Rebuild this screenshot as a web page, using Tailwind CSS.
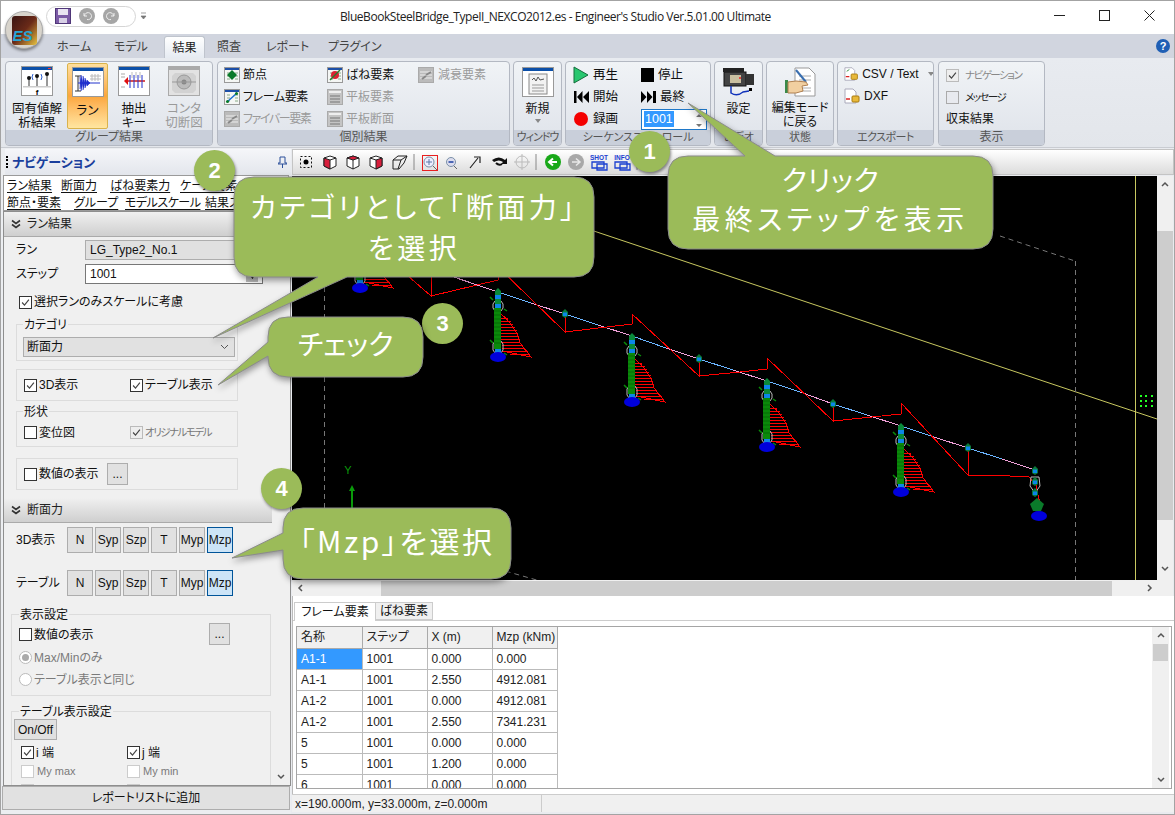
<!DOCTYPE html>
<html lang="ja">
<head>
<meta charset="UTF-8">
<title>Engineer's Studio</title>
<script src="https://cdn.jsdelivr.net/npm/@tailwindcss/browser@4"></script>
</head>
<body class="bg-[#e9ebef]">
<svg class="absolute w-0 h-0">
  <defs>
    <symbol id="dbl" viewBox="0 0 10 10"><path d="M1 1.5 5 4.5 9 1.5M1 5.5 5 8.5 9 5.5" fill="none" stroke="#333" stroke-width="1.6"/></symbol>
    <symbol id="chk" viewBox="0 0 13 13"><path d="M2.5 6.5 5.3 9.5 10.5 3" fill="none" stroke="#444" stroke-width="1.4"/></symbol>
    <symbol id="smallwin" viewBox="0 0 16 16"><rect x=".5" y=".5" width="15" height="15" fill="#f4f6f4" stroke="#999"/><rect x="1" y="1" width="14" height="2" fill="#1c4fa8"/><path d="M3 6h3M3 9h3M3 12h3M11 6h3M11 9h3M11 12h3" stroke="#8a8" /></symbol>
    <symbol id="smallgray" viewBox="0 0 16 16"><rect x=".5" y=".5" width="15" height="15" fill="#bbb" stroke="#aaa"/><path d="M2 5h12M2 8h12M2 11h12" stroke="#eee"/><path d="M8 8l5-3M4 12l4-3" stroke="#888" stroke-width="2"/></symbol>
    <symbol id="smallplate" viewBox="0 0 16 16"><rect x=".5" y=".5" width="15" height="15" fill="#c4c4c4" stroke="#aaa"/><path d="M2 3h12" stroke="#eee" stroke-width="2"/><path d="M3 7h10M3 10h10M3 13h10" stroke="#777"/></symbol>
    <symbol id="pier" viewBox="-20 -4 60 80" overflow="visible">
      <g fill="none" stroke="#ff0000" stroke-width="1" shape-rendering="crispEdges">
        <path d="M3 23 C12 30 20 42 22 52 L33 66 L4 60"/>
        <path d="M3 27H10M3 30H13M3 33H15M3 36H17M3 39H19M3 42H20M3 45H21M3 48H22M3 51H22M4 54H24M4 57H27M6 60H30M12 63H32"/>
      </g>
      <rect x="-3" y="0" width="6" height="64" fill="#0c86e8"/>
      <path d="M-3 10-5 13V17L-3 20H3L5 17V13L3 10Z" fill="none" stroke="#bbb"/>
      <path d="M-3 50-5 53V59L-3 62H3L5 59V53L3 50Z" fill="none" stroke="#bbb"/>
      <path d="M-3 0 0-3 3 0 3 4-3 4Z M-3 8H3V13H-3Z" fill="#0a8a3a"/>
      <rect x="-4" y="17" width="7" height="41" fill="#0a8a0a"/>
      <path d="M-4 20H3M-4 24H3M-4 28H3M-4 32H3M-4 36H3M-4 40H3M-4 44H3M-4 48H3M-4 52H3" stroke="#066a06"/>
      <path d="M-8 6-5 9M6 18 9 20M-8 49-5 52M6 62 9 64" stroke="#0a8a0a" stroke-width="1.5"/>
      <ellipse cx="0" cy="66" rx="8" ry="5" fill="#0000dc"/>
    </symbol>
    <symbol id="node" viewBox="-4 -5 8 10" overflow="visible"><path d="M0-5 3-2V2L0 4-3 2V-2Z" fill="#0a7a3a"/><rect x="-2" y="-1.5" width="4" height="3.5" fill="#0a86e8"/></symbol>
  </defs>
</svg>

<div class="relative w-[1175px] h-[815px] overflow-hidden border border-[#a3a3a3] flex flex-col text-[12px] leading-none text-[#111] [font-feature-settings:'palt'] font-['Liberation_Sans','Noto_Sans_CJK_JP',sans-serif]">

  <!-- title bar -->
  <div class="h-[33px] bg-white flex items-center relative">
    <div class="ml-[45px] w-[90px] h-[21px] mt-[-3px] rounded-full border border-[#d5d5d5] bg-white flex items-center pl-[8px] gap-[8px]">
      <svg width="16" height="16" viewBox="0 0 16 16"><rect x=".5" y=".5" width="15" height="15" fill="#7b5aa6" stroke="#4f3678"/><rect x="3" y="1" width="10" height="6" fill="#e9e3f2"/><rect x="4" y="10" width="8" height="5" fill="#d8d0e6"/></svg>
      <svg width="16" height="16" viewBox="0 0 16 16"><circle cx="8" cy="8" r="8" fill="#a6a6a6"/><path d="M5 5V8H8M5.5 8A3.5 3.5 0 1 1 8 11.5" fill="none" stroke="#eee"/></svg>
      <svg width="16" height="16" viewBox="0 0 16 16"><circle cx="8" cy="8" r="8" fill="#a6a6a6"/><path d="M11 5V8H8M10.500 8A3.500 3.500 0 1 0 8 11.500" fill="none" stroke="#eee"/></svg>
    </div>
    <svg class="ml-[4px] mt-[-3px]" width="7" height="8" viewBox="0 0 7 8"><path d="M1 1H6M1 4H6L3.500 7Z" fill="#777" stroke="#777" stroke-width=".7"/></svg>
    <div class="ml-[193px] w-[432px] whitespace-nowrap text-[12px] text-[#222] font-['Open_Sans','Noto_Sans_CJK_JP',sans-serif] tracking-[-0.45px] mt-[-1px]">BlueBookSteelBridge_TypeII_NEXCO2012.es - Engineer's Studio Ver.5.01.00 Ultimate</div>
    <div class="ml-auto flex items-center mr-[19px] gap-[34px] mt-[-5px]">
      <svg width="11" height="11" viewBox="0 0 11 11"><path d="M0 5.500H11" stroke="#222"/></svg>
      <svg width="11" height="11" viewBox="0 0 11 11"><rect x=".5" y=".5" width="10" height="10" fill="none" stroke="#222"/></svg>
      <svg width="11" height="11" viewBox="0 0 11 11"><path d="M.5 .5 10.500 10.500M10.500 .5 .5 10.500" stroke="#222"/></svg>
    </div>
  </div>

  <!-- app button -->
  <div class="absolute z-10 left-[4px] top-[10px] w-[38px] h-[38px] rounded-full bg-[#d8d4cc] border border-[#aaa] shadow-[0_2px_3px_rgba(0,0,0,.4)] flex items-center justify-center">
    <div class="relative w-[25px] h-[29px] rounded-[3px] overflow-hidden bg-linear-to-br from-[#3a1512] via-[#6a2a18] to-[#e6c440]">
      <span class="absolute left-[1px] bottom-[2px] text-[15px] font-bold italic text-[#27a6d6] font-['Liberation_Sans',sans-serif]">ES</span>
    </div>
  </div>

  <!-- tabs -->
  <div class="h-[24px] bg-[#d1d5df] flex items-end text-[#444] relative">
    <div class="ml-[56px] w-[57px] h-[24px] flex items-center pt-[1px]">ホーム</div>
    <div class="w-[50px] h-[24px] flex items-center pt-[1px]">モデル</div>
    <div class="w-[41px] h-[22px] flex items-center justify-center bg-linear-to-b from-white to-[#e6ebf2] border border-b-0 border-[#bfc4cd] rounded-t-[3px] text-[#222]">結果</div>
    <div class="ml-[12px] w-[49px] h-[24px] flex items-center pt-[1px]">照査</div>
    <div class="w-[62px] h-[24px] flex items-center pt-[1px]">レポート</div>
    <div class="h-[24px] flex items-center pt-[1px]">プラグイン</div>
    <div class="ml-auto mr-[4px] mb-[5px] w-[14px] h-[14px] rounded-full bg-[#1f5fb5] text-white text-[11px] font-bold flex items-center justify-center">?</div>
  </div>

  <!-- ribbon -->
  <div class="h-[90px] bg-linear-to-b from-[#e8ebf0] to-[#e3e6eb] border-b border-[#c9ccd2] pl-[4px] pt-[3px] flex text-[#111]">

    <div class="w-[208px] h-[85px] flex flex-col rounded-[4px] border border-[#b3b8c2] bg-linear-to-b from-[#f0f3f6] to-[#dfe3ea] overflow-hidden">
      <div class="h-[69px] flex text-center leading-[14px] relative">
        <div class="ml-[6px] w-[50px] flex flex-col items-center pt-[4px]">
          <svg width="32" height="30" viewBox="0 0 32 30"><rect x=".5" y=".5" width="31" height="29" fill="#fff" stroke="#999"/><rect x="1" y="1" width="30" height="3" fill="#0b4fa8"/><rect x="27" y="2" width="3" height="1" fill="#f33"/><path d="M8 20V12M16 20V9M26 20V7" stroke="#333"/><circle cx="8" cy="12" r="2" fill="#111"/><circle cx="16" cy="10" r="2" fill="#111"/><circle cx="26" cy="8" r="2" fill="#111"/><path d="M12 8Q10 11 12 14M20 8Q22 11 20 14" fill="none" stroke="#2a5fd0"/><rect x="2" y="20" width="28" height="1.500" fill="#ccc"/><text x="16" y="28.500" font-size="8" font-weight="bold" text-anchor="middle" font-family="Liberation Sans">f</text></svg>
          <span class="mt-[6px] text-[12.500px]">固有値解<br>析結果</span>
        </div>
        <div class="ml-[5px] w-[41px] h-[66px] mt-[1px] rounded-[2px] border border-[#d9b24c] bg-linear-to-b from-[#ffdf9c] via-[#fba63c] to-[#ffe6a0] flex flex-col items-center pt-[3px]">
          <svg width="32" height="30" viewBox="0 0 32 30"><rect x=".5" y=".5" width="31" height="29" fill="#fff" stroke="#999"/><rect x="1" y="1" width="30" height="3" fill="#0b4fa8"/><path d="M6 9V24M3 9H9M3 24H9" stroke="#333"/><path d="M6 16H28" stroke="#2233cc"/><path d="M8 16V10L9 16V8L11 16V9L13 16V11L15 16V13L18 16H8ZM8 16V22L9 16V24L11 16V23L13 16V21L15 16V19L18 16H8Z" fill="#2233cc" stroke="#2233cc" stroke-width=".5"/><path d="M20 7V14M23 7V14M26 7V14M18 9H29M18 12H29" stroke="#bbb"/></svg>
          <span class="mt-[7px] text-[12.500px]">ラン</span>
        </div>
        <div class="ml-[10px] w-[32px] flex flex-col items-center pt-[4px]">
          <svg width="32" height="30" viewBox="0 0 32 30"><rect x=".5" y=".5" width="31" height="29" fill="#fff" stroke="#999"/><rect x="1" y="1" width="30" height="3" fill="#0b4fa8"/><path d="M8 15H27" stroke="#d01818" stroke-width="1.500"/><path d="M6 15 10 11V19Z" fill="#e01010"/><path d="M12 9V22M16 9V22M20 9V22M24 9V22" stroke="#2233cc"/><path d="M3 8H7M3 11H7M3 21H7" stroke="#aaa"/><path d="M14 6V12M18 6V12M22 6V12" stroke="#bbb"/></svg>
          <span class="mt-[6px] text-[12.500px]">抽出<br>キー</span>
        </div>
        <div class="ml-[18px] w-[32px] flex flex-col items-center pt-[4px] text-[#9a9a9a]">
          <svg width="32" height="30" viewBox="0 0 32 30"><rect x=".5" y=".5" width="31" height="29" fill="#e2e2e2" stroke="#aaa"/><rect x="1" y="1" width="30" height="3" fill="#aaa"/><path d="M7 7H25L28 10V24L25 27H7L4 24V10Z" fill="#d2d2d2"/><circle cx="16" cy="16" r="7" fill="#bbb" stroke="#999"/><circle cx="16" cy="16" r="2.500" fill="#888"/><path d="M4 16H28" stroke="#999"/></svg>
          <span class="mt-[6px] text-[12.500px] whitespace-nowrap">コンタ<br>切断図</span>
        </div>
      </div>
      <div class="h-[15px] bg-[#c9cfda] text-center text-[#555] leading-[15px]">グループ結果</div>
    </div>

    <div class="ml-[4px] w-[293px] h-[85px] flex flex-col rounded-[4px] border border-[#b3b8c2] bg-linear-to-b from-[#f0f3f6] to-[#dfe3ea] overflow-hidden">
      <div class="h-[69px] grid grid-cols-[103px_91px_1fr] grid-rows-[22px_22px_22px] pt-[2px] pl-[6px] items-center text-[12px]">
        <div class="flex items-center gap-[3px]"><svg width="16" height="16"><use href="#smallwin"/><path d="M8 3 13 8 8 13 3 8Z" fill="#0a7a2a"/></svg>節点</div>
        <div class="flex items-center gap-[3px]"><svg width="16" height="16"><use href="#smallwin"/><circle cx="8" cy="8" r="4" fill="#d23"/><path d="M3 13 13 3" stroke="#2a7a2a" stroke-width="1.500"/></svg>ばね要素</div>
        <div class="flex items-center gap-[4px] text-[#9a9a9a]"><svg width="16" height="16"><use href="#smallgray"/></svg>減衰要素</div>
        <div class="flex items-center gap-[3px] whitespace-nowrap"><svg width="16" height="16"><use href="#smallwin"/><path d="M3 13 13 4" stroke="#1a6fd0" stroke-width="1.500"/><circle cx="3.500" cy="12.500" r="1.500" fill="#0a7a2a"/><circle cx="12.500" cy="4.500" r="1.500" fill="#0a7a2a"/></svg><span class="tracking-[-0.4px]">フレーム要素</span></div>
        <div class="flex items-center gap-[3px] text-[#9a9a9a]"><svg width="16" height="16"><use href="#smallplate"/></svg>平板要素</div>
        <div></div>
        <div class="flex items-center gap-[3px] text-[#9a9a9a] whitespace-nowrap"><svg width="16" height="16"><use href="#smallgray"/></svg><span class="tracking-[-1.4px]">ファイバー要素</span></div>
        <div class="flex items-center gap-[3px] text-[#9a9a9a]"><svg width="16" height="16"><use href="#smallplate"/></svg>平板断面</div>
        <div></div>
      </div>
      <div class="h-[15px] bg-[#c9cfda] text-center text-[#555] leading-[15px]">個別結果</div>
    </div>

    <div class="ml-[3px] w-[49px] h-[85px] flex flex-col rounded-[4px] border border-[#b3b8c2] bg-linear-to-b from-[#f0f3f6] to-[#dfe3ea] overflow-hidden">
      <div class="h-[69px] flex flex-col items-center pt-[5px]">
        <svg width="32" height="30" viewBox="0 0 32 30"><rect x=".5" y=".5" width="31" height="29" fill="#fff" stroke="#999"/><rect x="1" y="1" width="30" height="3" fill="#0b4fa8"/><rect x="7" y="7" width="18" height="20" fill="#f2f2f2" stroke="#888"/><path d="M10 13 12 11 14 14 16 10 18 13 22 12" fill="none" stroke="#555"/><path d="M10 18H22M10 21H22M10 24H22" stroke="#999"/></svg>
        <span class="mt-[6px]">新規</span>
        <svg class="mt-[4px]" width="6" height="4"><path d="M0 0H6L3 4Z" fill="#888"/></svg>
      </div>
      <div class="h-[15px] bg-[#c9cfda] text-center text-[#555] leading-[15px] text-[11px] tracking-[-1px] whitespace-nowrap">ウィンドウ</div>
    </div>

    <div class="ml-[3px] w-[146px] h-[85px] flex flex-col rounded-[4px] border border-[#b3b8c2] bg-linear-to-b from-[#f0f3f6] to-[#dfe3ea] overflow-hidden">
      <div class="h-[69px] grid grid-cols-[68px_1fr] grid-rows-[22px_22px_22px] pt-[2px] pl-[7px] items-center text-[12.500px]">
        <div class="flex items-center gap-[4px]"><svg width="16" height="18"><path d="M1 1 15 9 1 17Z" fill="#28c76f" stroke="#146c3c"/></svg>再生</div>
        <div class="flex items-center gap-[4px]"><span class="w-[13px] h-[14px] bg-black"></span>停止</div>
        <div class="flex items-center gap-[4px]"><svg width="16" height="12"><path d="M1 0H3.500V12H1ZM4 6 9.500 0V12ZM10 6 16 0V12Z"/></svg>開始</div>
        <div class="flex items-center gap-[4px]"><svg width="15" height="12"><path d="M0 0 5.500 6 0 12ZM6 0 11.500 6 6 12ZM12 0H15V12H12Z"/></svg>最終</div>
        <div class="flex items-center gap-[5px]"><span class="ml-[1px] w-[14px] h-[14px] rounded-full bg-[#f40000]"></span>録画</div>
        <div class="w-[66px] h-[21px] bg-white border border-[#1f78c8] flex items-center pl-[2px] relative">
          <span class="bg-[#3399ff] text-white px-[1px] py-[2px]">1001</span>
          <svg class="absolute right-[4px] top-[3px]" width="6" height="15"><path d="M3 1 6 4H0ZM0 11H6L3 14Z" fill="#777"/></svg>
        </div>
      </div>
      <div class="h-[15px] bg-[#c9cfda] text-center text-[#555] leading-[15px] text-[11px] whitespace-nowrap">シーケンスコントロール</div>
    </div>

    <div class="ml-[3px] w-[49px] h-[85px] flex flex-col rounded-[4px] border border-[#b3b8c2] bg-linear-to-b from-[#f0f3f6] to-[#dfe3ea] overflow-hidden">
      <div class="h-[69px] flex flex-col items-center pt-[5px]">
        <svg width="32" height="30" viewBox="0 0 32 30"><rect x="1" y="5" width="22" height="14" fill="#444" stroke="#111"/><rect x="0" y="1" width="21" height="4" fill="#222"/><rect x="23" y="7" width="8" height="11" fill="#333"/><rect x="7" y="8" width="11" height="8" fill="#c9bfa0"/><circle cx="17" cy="11" r="1" fill="#e22"/><path d="M8 19V26Q14 30 20 25L26 24" fill="none" stroke="#1133bb" stroke-width="1.500"/><rect x="26" y="21" width="3" height="3"/></svg>
        <span class="mt-[6px]">設定</span>
      </div>
      <div class="h-[15px] bg-[#c9cfda] text-center text-[#555] leading-[15px] text-[11px]">ビデオ</div>
    </div>

    <div class="ml-[3px] w-[68px] h-[85px] flex flex-col rounded-[4px] border border-[#b3b8c2] bg-linear-to-b from-[#f0f3f6] to-[#dfe3ea] overflow-hidden">
      <div class="h-[69px] flex flex-col items-center pt-[5px] text-center leading-[14px]">
        <svg width="32" height="30" viewBox="0 0 32 30"><path d="M11 1H25L31 7V29H11Z" fill="#fff" stroke="#999"/><path d="M15 9H27M15 13H27M17 21H27M17 24H27" stroke="#aaa"/><path d="M12 3 22 15" stroke="#3a6fb0" stroke-width="2"/><path d="M1 13H4V26H1Z" fill="#3a8a4a"/><path d="M4 15 12 14 22 15 24 18 18 19 19 24 12 26H4Z" fill="#f1cfa0" stroke="#b08050"/></svg>
        <span class="mt-[4px] whitespace-nowrap">編集モード<br>に戻る</span>
      </div>
      <div class="h-[15px] bg-[#c9cfda] text-center text-[#555] leading-[15px] text-[11px]">状態</div>
    </div>

    <div class="ml-[3px] w-[97px] h-[85px] flex flex-col rounded-[4px] border border-[#b3b8c2] bg-linear-to-b from-[#f0f3f6] to-[#dfe3ea] overflow-hidden">
      <div class="h-[69px] pl-[6px] pt-[4px] flex flex-col gap-[6px] whitespace-nowrap">
        <div class="flex items-center gap-[3px]"><svg width="17" height="16" viewBox="0 0 17 16"><path d="M1 1H9L12 4V15H1Z" fill="#fff" stroke="#aab"/><path d="M3 5 6 3" stroke="#2a8a3a"/><path d="M2 11H6" stroke="#d22" stroke-width="1.500"/><rect x="8" y="8" width="7" height="6" rx="1" fill="#e8b93a" stroke="#a87a10"/></svg>CSV / Text<svg class="ml-[6px]" width="6" height="4"><path d="M0 0H6L3 4Z" fill="#888"/></svg></div>
        <div class="flex items-center gap-[3px]"><svg width="17" height="16" viewBox="0 0 17 16"><path d="M1 1H9L12 4V15H1Z" fill="#fff" stroke="#aab"/><path d="M2 11H6" stroke="#d22" stroke-width="1.500"/><rect x="8" y="8" width="7" height="6" rx="1" fill="#e8b93a" stroke="#a87a10"/></svg>DXF</div>
      </div>
      <div class="h-[15px] bg-[#c9cfda] text-center text-[#555] leading-[15px] text-[11px] tracking-[-0.5px]">エクスポート</div>
    </div>

    <div class="ml-[4px] w-[107px] h-[85px] flex flex-col rounded-[4px] border border-[#b3b8c2] bg-linear-to-b from-[#f0f3f6] to-[#dfe3ea] overflow-hidden">
      <div class="h-[69px] pl-[7px] pt-[6px] flex flex-col gap-[8px]">
        <div class="flex items-center gap-[6px] text-[#888] text-[10.500px] tracking-[-1.500px] h-[14px] whitespace-nowrap"><span class="w-[13px] h-[13px] border border-[#bbb] bg-[#eee] flex"><svg width="11" height="11"><use href="#chk"/></svg></span>ナビゲーション</div>
        <div class="flex items-center gap-[6px] text-[10.500px] tracking-[-1.500px] h-[14px] text-[#222]"><span class="w-[13px] h-[13px] border border-[#aaa] bg-[#e8eaef]"></span>メッセージ</div>
        <div class="h-[14px] flex items-center">収束結果</div>
      </div>
      <div class="h-[15px] bg-[#c9cfda] text-center text-[#555] leading-[15px]">表示</div>
    </div>
  </div>

  <!-- work area -->
  <div class="flex-1 flex min-h-0">

    <!-- navigation -->
    <div class="w-[290px] flex flex-col bg-[#eceef1]">
      <div class="mt-[1px] ml-[4px] h-[26px] flex items-center bg-linear-to-b from-[#f5f6f9] to-[#e3e6ec]">
        <span class="w-[2px] h-[12px] border-l-2 border-dotted border-black ml-[1px]"></span>
        <span class="ml-[4px] text-[13px] font-bold text-[#1a3f9c]">ナビゲーション</span>
        <svg class="ml-auto mr-[4px]" width="9" height="12" viewBox="0 0 9 12"><path d="M2 1H7V7H9V8H0V7H2ZM4.500 8V12" fill="none" stroke="#2a4f9a"/></svg>
      </div>
      <div class="ml-[2px] w-[286px] h-[36px] bg-white border border-[#9a9a9a] overflow-hidden pl-[3px] pt-[2px] text-[12px] leading-[17px] underline underline-offset-2 whitespace-nowrap">
        <div class="flex"><span class="w-[54px]">ラン結果</span><span class="w-[49px]">断面力</span><span class="w-[70px]">ばね要素力</span><span>ケース要素</span></div>
        <div class="flex"><span class="w-[67px]">節点・要素</span><span class="w-[51px]">グループ</span><span class="w-[80px] tracking-[-0.5px]">モデルスケール</span><span>結果スケール</span></div>
      </div>

      <div class="ml-[2px] w-[288px] h-[575px] border border-[#8e8e8e] flex overflow-hidden bg-[#f0f0f0]">
        <div class="w-[268px] overflow-hidden">
          <div class="h-[25px] flex items-center gap-[6px] pl-[7px] bg-linear-to-b from-[#f0f0f0] to-[#cfcfcf] border-b border-[#aaa] text-[#222]">
            <svg width="10" height="10"><use href="#dbl"/></svg>ラン結果
          </div>
          <div class="h-[261px] relative">
            <div class="pt-[3px] flex items-center">
              <span class="ml-[12px] w-[69px]">ラン</span>
              <div class="w-[178px] h-[20px] bg-[#e0e0e0] border border-[#adadad] flex items-center pl-[4px]">LG_Type2_No.1</div>
            </div>
            <div class="mt-[4px] flex items-center">
              <span class="ml-[12px] w-[69px]">ステップ</span>
              <div class="w-[178px] h-[20px] bg-white border border-[#777] flex items-center pl-[4px] relative">1001<span class="absolute right-[4px] bottom-[1px] w-[12px] h-[8px] bg-[#bbb] flex justify-center"><svg width="7" height="5"><path d="M0 0H7L3.500 5Z"/></svg></span></div>
            </div>
            <div class="mt-[11px] ml-[15px] flex items-center gap-[2px] h-[14px]"><span class="w-[13px] h-[13px] border border-[#333] bg-white"><svg width="11" height="11"><use href="#chk"/></svg></span>選択ランのみスケールに考慮</div>
            <div class="relative mt-[15px] ml-[12px] w-[222px] h-[37px] border border-[#dcdcdc]">
              <span class="absolute left-[6px] top-[-6px] bg-[#f0f0f0] px-[1px]">カテゴリ</span>
              <div class="absolute left-[6px] top-[12px] w-[212px] h-[20px] bg-[#e1e1e1] border border-[#adadad] flex items-center pl-[3px]">断面力<svg class="ml-auto mr-[5px]" width="9" height="6"><path d="M1 1 4.500 4.500 8 1" fill="none" stroke="#555"/></svg></div>
            </div>
            <div class="mt-[8px] ml-[12px] w-[222px] h-[32px] border border-[#dcdcdc] flex items-center pl-[7px]">
              <span class="w-[13px] h-[13px] border border-[#333] bg-white"><svg width="11" height="11"><use href="#chk"/></svg></span><span class="ml-[2px] w-[91px]">3D表示</span>
              <span class="w-[13px] h-[13px] border border-[#333] bg-white"><svg width="11" height="11"><use href="#chk"/></svg></span><span class="ml-[2px]">テーブル表示</span>
            </div>
            <div class="relative mt-[10px] ml-[12px] w-[222px] h-[36px] border border-[#dcdcdc] flex items-center pl-[7px] pt-[7px]">
              <span class="absolute left-[6px] top-[-6px] bg-[#f0f0f0] px-[1px]">形状</span>
              <span class="w-[13px] h-[13px] border border-[#333] bg-white"></span><span class="ml-[2px] w-[91px]">変位図</span>
              <span class="w-[13px] h-[13px] border border-[#bbb] bg-[#eee]"><svg width="11" height="11"><use href="#chk"/></svg></span><span class="ml-[2px] text-[10.500px] tracking-[-1.500px] text-[#777] whitespace-nowrap">オリジナルモデル</span>
            </div>
            <div class="mt-[11px] ml-[12px] w-[222px] h-[32px] border border-[#dcdcdc] flex items-center pl-[7px]">
              <span class="w-[13px] h-[13px] border border-[#333] bg-white"></span><span class="ml-[2px] w-[68px]">数値の表示</span>
              <span class="w-[21px] h-[22px] border border-[#adadad] bg-[#e1e1e1] flex items-center justify-center">...</span>
            </div>
          </div>
          <div class="h-[25px] flex items-center gap-[6px] pl-[7px] bg-linear-to-b from-[#f0f0f0] to-[#cfcfcf] border-b border-[#aaa] text-[#222]">
            <svg width="10" height="10"><use href="#dbl"/></svg>断面力
          </div>
          <div class="mt-[4px] flex items-center h-[26px]">
            <span class="ml-[12px] w-[51px] whitespace-nowrap">3D表示</span>
            <div class="flex gap-[2px]">
              <span class="w-[26px] h-[26px] bg-[#e1e1e1] border border-[#adadad] flex items-center justify-center">N</span>
              <span class="w-[26px] h-[26px] bg-[#e1e1e1] border border-[#adadad] flex items-center justify-center">Syp</span>
              <span class="w-[26px] h-[26px] bg-[#e1e1e1] border border-[#adadad] flex items-center justify-center">Szp</span>
              <span class="w-[26px] h-[26px] bg-[#e1e1e1] border border-[#adadad] flex items-center justify-center">T</span>
              <span class="w-[26px] h-[26px] bg-[#e1e1e1] border border-[#adadad] flex items-center justify-center">Myp</span>
              <span class="w-[26px] h-[26px] bg-[#cce4f7] border border-[#005499] flex items-center justify-center">Mzp</span>
            </div>
          </div>
          <div class="mt-[17px] flex items-center h-[26px]">
            <span class="ml-[12px] w-[51px] whitespace-nowrap">テーブル</span>
            <div class="flex gap-[2px]">
              <span class="w-[26px] h-[26px] bg-[#e1e1e1] border border-[#adadad] flex items-center justify-center">N</span>
              <span class="w-[26px] h-[26px] bg-[#e1e1e1] border border-[#adadad] flex items-center justify-center">Syp</span>
              <span class="w-[26px] h-[26px] bg-[#e1e1e1] border border-[#adadad] flex items-center justify-center">Szp</span>
              <span class="w-[26px] h-[26px] bg-[#e1e1e1] border border-[#adadad] flex items-center justify-center">T</span>
              <span class="w-[26px] h-[26px] bg-[#e1e1e1] border border-[#adadad] flex items-center justify-center">Myp</span>
              <span class="w-[26px] h-[26px] bg-[#cce4f7] border border-[#005499] flex items-center justify-center">Mzp</span>
            </div>
          </div>
          <div class="relative mt-[18px] ml-[7px] w-[260px] h-[82px] border border-[#dcdcdc]">
            <span class="absolute left-[7px] top-[-6px] bg-[#f0f0f0] px-[1px]">表示設定</span>
            <div class="absolute left-[7px] top-[13px] flex items-center"><span class="w-[13px] h-[13px] border border-[#333] bg-white"></span><span class="ml-[2px]">数値の表示</span></div>
            <span class="absolute left-[197px] top-[8px] w-[21px] h-[22px] border border-[#adadad] bg-[#e1e1e1] flex items-center justify-center">...</span>
            <div class="absolute left-[7px] top-[36px] flex items-center text-[#7a7a7a]"><span class="w-[13px] h-[13px] rounded-full border border-[#bbb] bg-white flex items-center justify-center"><span class="w-[7px] h-[7px] rounded-full bg-[#aaa]"></span></span><span class="ml-[2px]">Max/Minのみ</span></div>
            <div class="absolute left-[7px] top-[58px] flex items-center text-[#7a7a7a]"><span class="w-[13px] h-[13px] rounded-full border border-[#bbb] bg-white"></span><span class="ml-[2px]">テーブル表示と同じ</span></div>
          </div>
          <div class="relative mt-[15px] ml-[7px] w-[260px] h-[80px] border border-[#dcdcdc]">
            <span class="absolute left-[7px] top-[-6px] bg-[#f0f0f0] px-[1px]">テーブル表示設定</span>
            <span class="absolute left-[2px] top-[7px] w-[43px] h-[21px] bg-[#e1e1e1] border border-[#adadad] flex items-center justify-center">On/Off</span>
            <div class="absolute left-[9px] top-[34px] flex items-center"><span class="w-[13px] h-[13px] border border-[#333] bg-white"><svg width="11" height="11"><use href="#chk"/></svg></span><span class="ml-[2px]">i 端</span></div>
            <div class="absolute left-[115px] top-[34px] flex items-center"><span class="w-[13px] h-[13px] border border-[#333] bg-white"><svg width="11" height="11"><use href="#chk"/></svg></span><span class="ml-[2px]">j 端</span></div>
            <div class="absolute left-[9px] top-[53px] flex items-center text-[#7a7a7a] text-[11px]"><span class="w-[13px] h-[13px] border border-[#ccc] bg-white"></span><span class="ml-[3px]">My max</span></div>
            <div class="absolute left-[115px] top-[53px] flex items-center text-[#7a7a7a] text-[11px]"><span class="w-[13px] h-[13px] border border-[#ccc] bg-white"></span><span class="ml-[3px]">My min</span></div>
            <div class="absolute left-[9px] top-[72px] flex items-center text-[#7a7a7a] text-[11px]"><span class="w-[13px] h-[13px] border border-[#ccc] bg-white"></span><span class="ml-[3px]">Mz max</span></div>
            <div class="absolute left-[115px] top-[72px] flex items-center text-[#7a7a7a] text-[11px]"><span class="w-[13px] h-[13px] border border-[#ccc] bg-white"></span><span class="ml-[3px]">Mz min</span></div>
          </div>
        </div>
        <div class="flex-1 bg-[#f0f0f0] flex items-end justify-center pb-[5px]"><svg width="8" height="6"><path d="M1 1 4 4 7 1" fill="none" stroke="#555" stroke-width="1.500"/></svg></div>
      </div>
      <div class="ml-[1px] w-[288px] h-[24px] bg-[#e1e1e1] border border-[#adadad] flex items-center justify-center">レポートリストに追加</div>
    </div>

    <!-- main -->
    <div class="flex-1 flex flex-col pl-[1px] min-w-0">
      <div class="mt-[1px] h-[26px] border border-[#c4c4c4] bg-linear-to-b from-white to-[#dcdcdc] flex items-center relative">
        <svg class="ml-[5px]" width="344" height="18" viewBox="296 154 344 18">
          <rect x="298.500" y="157.500" width="11" height="11" fill="none" stroke="#111" stroke-dasharray="2 2"/><circle cx="304" cy="163" r="2.500"/>
          <g stroke="#222" fill="#fff"><path d="M322 159 328 157 334 159V167L328 170 322 167Z"/><path d="M322 159 328 161V170L322 167Z" fill="#d81e3c"/><path d="M328 161 334 159"/></g>
          <g stroke="#222" fill="#fff"><path d="M345 159 351 157 357 159V167L351 170 345 167Z"/><path d="M345 159 351 157 357 159 351 161Z" fill="#d81e3c"/><path d="M351 161V170"/></g>
          <g stroke="#222" fill="#fff"><path d="M368 159 374 157 380 159V167L374 170 368 167Z"/><path d="M374 161 380 159V167L374 170Z" fill="#d81e3c"/><path d="M368 159 374 161"/></g>
          <g stroke="#222" fill="none"><path d="M391 161 396 157H405L402 164 397 170H391Z"/><path d="M391 161H399L396 170M399 161 405 157"/></g>
          <path d="M412 155V171" stroke="#888"/>
          <rect x="420.500" y="156.500" width="15" height="15" fill="none" stroke="#e82020"/>
          <circle cx="427" cy="163" r="5" fill="#eef" stroke="#7a90a8"/><path d="M424 163H430M427 160V166" stroke="#5a78a8"/><path d="M431 167 435 171" stroke="#666"/>
          <circle cx="449" cy="163" r="4.500" fill="#dde" stroke="#7a90a8"/><path d="M446.500 163H451.500" stroke="#1a3fa0" stroke-width="1.500"/><path d="M452 167 455 170" stroke="#666"/>
          <path d="M468 169 476 159M472 158H478V164" fill="none" stroke="#222" stroke-width="1.200"/>
          <path d="M490 161Q497 156 503 161L505 159V165H499L501 163Q497 160 492 163Z" fill="#111"/><path d="M494 164Q497 167 500 165" stroke="#111" stroke-width="2" fill="none"/>
          <circle cx="520" cy="163" r="6" fill="none" stroke="#bbb"/><path d="M512 163H528M520 155V171" stroke="#bbb"/>
          <path d="M534 155V171" stroke="#888"/>
          <circle cx="551" cy="163" r="8" fill="#18a818"/><path d="M555 163H548M551 159.500 547 163 551 166.500" fill="none" stroke="#fff" stroke-width="2"/>
          <circle cx="574" cy="163" r="8" fill="#a8a8a8"/><path d="M570 163H577M574 159.500 578 163 574 166.500" fill="none" stroke="#e8e8e8" stroke-width="1.500"/>
          <text x="597" y="161" font-size="6.500" font-weight="bold" text-anchor="middle" fill="#1a3fd0" font-family="Liberation Sans">SHOT</text>
          <path d="M590 163H602V169H590ZM595 165H605V171H595Z" fill="none" stroke="#1a3fd0" stroke-width="1.300"/>
          <text x="620" y="161" font-size="6.500" font-weight="bold" text-anchor="middle" fill="#1a3fd0" font-family="Liberation Sans">INFO</text>
          <path d="M613 163H625V169H613ZM618 165H628V171H618Z" fill="none" stroke="#1a3fd0" stroke-width="1.300"/>
          <path d="M635 155V171" stroke="#888"/>
        </svg>
      </div>

      <div class="mt-[1px] h-[404px] flex">
        <!-- model view -->
        <svg class="w-[865px] h-[404px] bg-black" viewBox="292 177 865 404">
          <path d="M450 184 1157 420" stroke="#c8c860" fill="none"/>
          <path d="M1135.500 177V581" stroke="#c8c860"/>
          <g stroke="#777" stroke-dasharray="5 4" fill="none">
            <path d="M1075.500 262V581"/>
            <path d="M1000 237 1075 262"/>
            <path d="M324.500 180V567"/>
            <path d="M324 520 540 582"/>
          </g>
          <g fill="#2f2">
            <rect x="1140" y="396" width="2" height="2"/><rect x="1145" y="396" width="2" height="2"/><rect x="1151" y="396" width="2" height="2"/>
            <rect x="1140" y="401" width="2" height="2"/><rect x="1145" y="401" width="2" height="2"/><rect x="1151" y="401" width="2" height="2"/>
            <rect x="1140" y="406" width="2" height="2"/><rect x="1145" y="406" width="2" height="2"/><rect x="1151" y="406" width="2" height="2"/>
          </g>
          <g fill="none" stroke-width="1" shape-rendering="crispEdges">
            <path d="M498 293 531 304M565 315 598 326M632 337 666 349M699 360 733 371M767 382 800 393M833 405 867 416M901 427 934 438M968 449 1002 460" stroke="#6ab4ff"/>
            <path d="M430 270 498 293M531 304 565 315M598 326 632 337M666 349 699 360M733 371 767 382M800 393 833 405M867 416 901 427M934 438 968 449M1002 460 1035 471" stroke="#f0a0d8"/>
          </g>
          <path shape-rendering="crispEdges" d="M400 270 431 297V270M431 297 498 281V268L565 333V315M565 333 632 325V315L699 377V360M699 377 740 373 767 370V359L833 422V405M833 422 901 415V404L968 476V449M968 476 1010 477 1029 478 1036 486 1041 510" fill="none" stroke="#f00"/>
          <use href="#pier" x="340" y="219" width="60" height="80"/>
          <use href="#pier" x="478" y="288" width="60" height="80"/>
          <use href="#pier" x="612" y="333" width="60" height="80"/>
          <use href="#pier" x="747" y="378" width="60" height="80"/>
          <use href="#pier" x="881" y="423" width="60" height="80"/>
          <use href="#node" x="561" y="310" width="8" height="10"/>
          <use href="#node" x="695" y="355" width="8" height="10"/>
          <use href="#node" x="829" y="400" width="8" height="10"/>
          <use href="#node" x="964" y="444" width="8" height="10"/>
          <path d="M1031 478 1030 487 1035 494 1040 487 1039 478Z" fill="none" stroke="#bbb"/>
          <use href="#node" x="1031" y="467" width="8" height="10"/>
          <use href="#node" x="1031" y="478" width="8" height="10"/>
          <use href="#node" x="1031" y="489" width="8" height="10"/>
          <path d="M1037 499 1044 505 1041 512H1033L1030 505Z" fill="#0a7a2a"/>
          <ellipse cx="1039" cy="517" rx="8" ry="5" fill="#0000dc"/>
          <text x="348" y="475" font-size="11" fill="#0a9a0a" text-anchor="middle" font-family="Liberation Sans">Y</text>
          <path d="M352 486 355 492H353V510H351V492H349Z" fill="#0a9a0a"/>
        </svg>
        <div class="w-[16px] bg-[#f0f0f0] flex flex-col items-center relative">
          <svg class="mt-[5px]" width="8" height="6"><path d="M1 5 4 2 7 5" fill="none" stroke="#555" stroke-width="1.500"/></svg>
          <div class="mt-[44px] w-full h-[289px] bg-[#cdcdcd]"></div>
          <svg class="mt-[46px]" width="8" height="6"><path d="M1 1 4 4 7 1" fill="none" stroke="#555" stroke-width="1.500"/></svg>
        </div>
      </div>

      <div class="h-[16px] w-[881px] bg-[#f0f0f0] flex items-center">
        <svg class="ml-[5px]" width="6" height="8"><path d="M5 1 2 4 5 7" fill="none" stroke="#555" stroke-width="1.500"/></svg>
        <div class="ml-[78px] w-[731px] h-[15px] bg-[#cdcdcd]"></div>
        <svg class="ml-[35px]" width="6" height="8"><path d="M1 1 4 4 1 7" fill="none" stroke="#555" stroke-width="1.500"/></svg>
      </div>

      <div class="h-[198px] bg-white flex flex-col border-l border-[#bbb]">
        <div class="mt-[6px] h-[19px] border-b border-[#ccc] flex items-end pl-[1px]">
          <span class="w-[82px] h-[19px] bg-white border border-b-0 border-[#ccc] flex items-center justify-center -mb-px">フレーム要素</span>
          <span class="w-[57px] h-[18px] bg-[#f0f0f0] border border-l-0 border-[#ccc] flex items-center justify-center">ばね要素</span>
        </div>
        <div class="mt-[5px] ml-[3px] w-[876px] h-[163px] border border-[#a5a5a5] flex overflow-hidden">
          <div class="flex-1 overflow-hidden">
            <table class="w-[260px] table-fixed border-collapse text-[12px] text-[#222]">
              <tbody>
                <tr class="h-[21px] bg-[#f0f0f0]"><td class="w-[65px] pl-[4px] border-r border-b border-[#aaa]">名称</td><td class="w-[65px] pl-[4px] border-r border-b border-[#aaa]">ステップ</td><td class="w-[65px] pl-[4px] border-r border-b border-[#aaa]">X (m)</td><td class="w-[65px] pl-[4px] border-r border-b border-[#aaa]">Mzp (kNm)</td></tr>
                <tr class="h-[21px]"><td class="pl-[4px] bg-[#3399ff] text-white border-r border-b border-[#bbb]">A1-1</td><td class="pl-[4px] border-r border-b border-[#bbb]">1001</td><td class="pl-[4px] border-r border-b border-[#bbb]">0.000</td><td class="pl-[4px] border-r border-b border-[#bbb]">0.000</td></tr>
                <tr class="h-[21px]"><td class="pl-[4px] border-r border-b border-[#bbb]">A1-1</td><td class="pl-[4px] border-r border-b border-[#bbb]">1001</td><td class="pl-[4px] border-r border-b border-[#bbb]">2.550</td><td class="pl-[4px] border-r border-b border-[#bbb]">4912.081</td></tr>
                <tr class="h-[21px]"><td class="pl-[4px] border-r border-b border-[#bbb]">A1-2</td><td class="pl-[4px] border-r border-b border-[#bbb]">1001</td><td class="pl-[4px] border-r border-b border-[#bbb]">0.000</td><td class="pl-[4px] border-r border-b border-[#bbb]">4912.081</td></tr>
                <tr class="h-[21px]"><td class="pl-[4px] border-r border-b border-[#bbb]">A1-2</td><td class="pl-[4px] border-r border-b border-[#bbb]">1001</td><td class="pl-[4px] border-r border-b border-[#bbb]">2.550</td><td class="pl-[4px] border-r border-b border-[#bbb]">7341.231</td></tr>
                <tr class="h-[21px]"><td class="pl-[4px] border-r border-b border-[#bbb]">5</td><td class="pl-[4px] border-r border-b border-[#bbb]">1001</td><td class="pl-[4px] border-r border-b border-[#bbb]">0.000</td><td class="pl-[4px] border-r border-b border-[#bbb]">0.000</td></tr>
                <tr class="h-[21px]"><td class="pl-[4px] border-r border-b border-[#bbb]">5</td><td class="pl-[4px] border-r border-b border-[#bbb]">1001</td><td class="pl-[4px] border-r border-b border-[#bbb]">1.200</td><td class="pl-[4px] border-r border-b border-[#bbb]">0.000</td></tr>
                <tr class="h-[21px]"><td class="pl-[4px] border-r border-b border-[#bbb]">6</td><td class="pl-[4px] border-r border-b border-[#bbb]">1001</td><td class="pl-[4px] border-r border-b border-[#bbb]">0.000</td><td class="pl-[4px] border-r border-b border-[#bbb]">0.000</td></tr>
              </tbody>
            </table>
          </div>
          <div class="w-[17px] mr-[2px] bg-[#f0f0f0] flex flex-col items-center">
            <svg class="mt-[5px]" width="8" height="6"><path d="M1 5 4 2 7 5" fill="none" stroke="#555" stroke-width="1.500"/></svg>
            <div class="mt-[6px] w-[15px] h-[17px] bg-[#cdcdcd]"></div>
            <svg class="mt-auto mb-[5px]" width="8" height="6"><path d="M1 1 4 4 7 1" fill="none" stroke="#555" stroke-width="1.500"/></svg>
          </div>
        </div>
      </div>

      <div class="h-[18px] flex items-center bg-[#f0f0f0] border-t border-[#ccc] text-[12px] text-[#222]">
        <span class="w-[250px] pl-[3px] h-full flex items-center border-r border-[#ccc]">x=190.000m, y=33.000m, z=0.000m</span>
      </div>
    </div>
  </div>

  <!-- callouts -->
  <div class="absolute left-[628px] top-[130px] w-[41px] h-[41px] rounded-full bg-[#9bbb59] shadow-[1px_2px_3px_rgba(0,0,0,.45)] flex items-center justify-center text-white text-[22px] font-bold">1</div>
  <div class="absolute left-[193px] top-[149px] w-[41px] h-[41px] rounded-full bg-[#9bbb59] shadow-[1px_2px_3px_rgba(0,0,0,.45)] flex items-center justify-center text-white text-[22px] font-bold">2</div>
  <div class="absolute left-[421px] top-[302px] w-[41px] h-[41px] rounded-full bg-[#9bbb59] shadow-[1px_2px_3px_rgba(0,0,0,.45)] flex items-center justify-center text-white text-[22px] font-bold">3</div>
  <div class="absolute left-[260px] top-[467px] w-[41px] h-[41px] rounded-full bg-[#9bbb59] shadow-[1px_2px_3px_rgba(0,0,0,.45)] flex items-center justify-center text-white text-[22px] font-bold">4</div>

  <svg class="absolute left-[-1px] top-[-1px] w-[1175px] h-[815px] pointer-events-none drop-shadow-[1px_3px_3px_rgba(0,0,0,.4)]" viewBox="0 0 1175 815">
    <g fill="#9bbb59" stroke="#8b8b8b" stroke-width="1">
      <path d="M688 103 745 156H688Q668 156 668 176V229Q668 249 688 249H973Q993 249 993 229V176Q993 156 973 156H775Z"/>
      <path d="M254 177H574Q594 177 594 197V257Q594 277 574 277H347L213 338 318 277H254Q234 277 234 257V197Q234 177 254 177Z"/>
      <path d="M288 317H403Q423 317 423 337V357Q423 377 403 377H288Q268 377 268 357V356L218 385 268 342V337Q268 317 288 317Z"/>
      <path d="M303 508H491Q511 508 511 528V559Q511 579 491 579H303Q283 579 283 559V550L232 558 283 533V528Q283 508 303 508Z"/>
    </g>
  </svg>
  <div class="absolute left-[667px] top-[155px] w-[325px] h-[93px] pb-[8px] flex flex-col items-center justify-center text-white text-[28px] leading-[39px] font-['Noto_Sans_CJK_JP',sans-serif] font-normal whitespace-nowrap"><span class="tracking-[0.5px]">クリック</span><span class="tracking-[4.500px]">最終ステップを表示</span></div>
  <div class="absolute left-[233px] top-[176px] w-[360px] h-[100px] flex flex-col items-center justify-center text-white text-[28px] leading-[41px] tracking-[3.500px] font-['Noto_Sans_CJK_JP',sans-serif] font-normal whitespace-nowrap"><span>カテゴリとして「断面力」</span><span>を選択</span></div>
  <div class="absolute left-[267px] top-[316px] w-[155px] h-[60px] pb-[8px] flex items-center justify-center text-white text-[28px] font-['Noto_Sans_CJK_JP',sans-serif]">チェック</div>
  <div class="absolute left-[282px] top-[507px] w-[228px] h-[71px] pb-[8px] flex items-center justify-center text-white text-[30px] tracking-[2.500px] font-['Noto_Sans_CJK_JP',sans-serif] whitespace-nowrap">「Mzp」を選択</div>
</div>
</body>
</html>
